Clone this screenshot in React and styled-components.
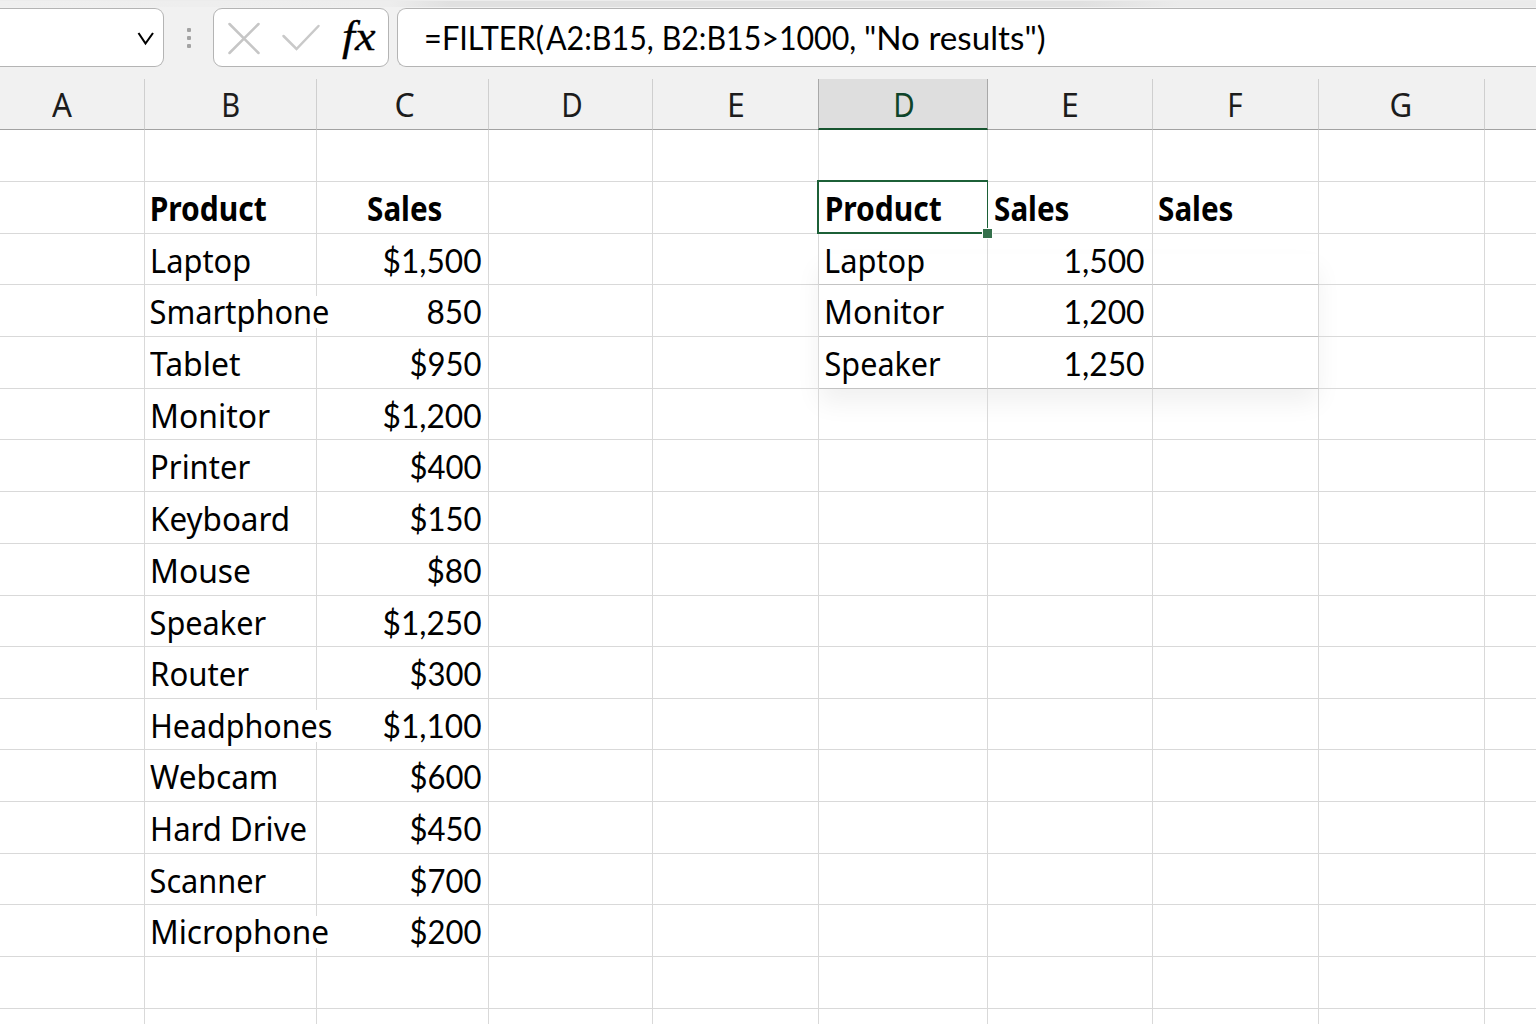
import React, { useLayoutEffect, useRef, useState } from 'react'
import styled, { createGlobalStyle, css } from 'styled-components'

const GlobalStyle = createGlobalStyle`
    * { box-sizing: border-box; }
    body {
        margin: 0;
        overflow: hidden;
        background: #fff;
        font-family: "Noto Sans", "Open Sans", sans-serif;
    }
`

const Window = styled.div`
    display: flex;
    flex-direction: column;
    width: 1536px;
    height: 1024px;
    overflow: hidden;
    color: #000;
`

const RibbonEdge = styled.div`
    flex: none;
    height: 7px;
    border-top: 1px solid #ececec;
    background: linear-gradient(to right, #efefef 0, #ededed 390px, #e0e0e0 450px, #e0e0e0 1080px, #ebebeb 1180px);
`

const FormulaBar = styled.div`
    display: flex;
    flex: none;
    height: 72px;
    padding-top: 1px;
    background: #f1f1f1;
`

const BarBox = styled.div`
    display: flex;
    align-items: center;
    height: 59px;
    border: 1px solid #b4b4b4;
    border-radius: 9px;
    background: #fff;
`

const NameBox = styled(BarBox)`
    width: 164px;
    justify-content: flex-end;
    padding-right: 8px;
    border-left: 0;
    border-radius: 0 9px 9px 0;
`

const Grip = styled.div`
    display: flex;
    flex-direction: column;
    align-items: center;
    justify-content: center;
    gap: 4px;
    width: 49px;
    height: 59px;
`

const Dot = styled.span`
    width: 4px;
    height: 4px;
    border-radius: 1px;
    background: #a3a3a3;
`

const ActionBox = styled(BarBox)`
    width: 176px;
    margin-right: 8px;
    padding-left: 13px;
    gap: 18px;
`

const FxLabel = styled.span`
    margin: 0 0 3px 3px;
    font: italic 43px/54px "Liberation Serif", serif;
    transform: scaleX(1.08);
    transform-origin: 0 50%;
    -webkit-text-stroke: 0.3px #000;
`

const FormulaInput = styled(BarBox)`
    flex: 1;
    padding: 0 0 2px 28px;
    border-right: 0;
    border-radius: 9px 0 0 9px;
`

const FormulaPart = styled.span`
    margin-right: ${({ $gap }) => $gap}px;
`

const ColumnHeads = styled.div`
    display: flex;
    flex: none;
    height: 51px;
    background: #f1f1f1;
`

const ColumnHead = styled.div`
    display: flex;
    justify-content: center;
    flex: none;
    width: ${({ $width }) => $width}px;
    padding-right: ${({ $after }) => $after || 0}px;
    padding-left: ${({ $before }) => $before || 0}px;
    border-right: 1px solid #cfcfcf;
    border-bottom: 1px solid #a2a2a2;
    color: #1c1c1c;
    ${({ $active }) => $active && css`
        margin-left: -1px;
        border-left: 1px solid #a8a8a8;
        border-right-color: #a8a8a8;
        border-bottom: 2px solid #17542f;
        background: #dedede;
        color: #0e4429;
    `}
`

const Row = styled.div`
    display: flex;
    flex: none;
    height: ${({ $height }) => $height}px;
`

const Cell = styled.div`
    position: relative;
    display: flex;
    flex: none;
    justify-content: ${({ $align }) => ($align === 'right' ? 'flex-end' : 'flex-start')};
    width: ${({ $width }) => $width}px;
    padding: 1px ${({ $inset }) => $inset || 7}px 0 ${({ $indent }) => $indent || 6}px;
    border-right: 1px solid #d9d9d9;
    border-bottom: 1px solid ${({ $spill }) => ($spill ? '#c3c3c3' : '#d9d9d9')};
`

const TextBox = styled.span`
    display: block;
    flex: none;
    width: ${({ $width }) => $width}px;
    height: 50px;
    font-family: ${({ $numeric }) => ($numeric ? 'Lato, sans-serif' : 'inherit')};
    font-size: 33.5px;
    font-weight: ${({ $bold }) => ($bold ? 700 : 400)};
    line-height: 50px;
    white-space: pre;
    ${({ $cover }) => $cover && css`
        background: linear-gradient(#fff, #fff) 0 10px / 100% 32px no-repeat;
    `}
`

const TextRun = styled.span`
    display: inline-block;
    transform-origin: 0 50%;
`

const Selection = styled.div`
    position: absolute;
    z-index: 2;
    inset: -2px -1px -1px -2px;
    border: 2px solid #1c6037;
    border-right-width: 1px;
`

const FillHandle = styled.div`
    position: absolute;
    right: -6px;
    bottom: -7px;
    width: 11px;
    height: 11px;
    border: 1px solid #fff;
    background: #35714c;
`

const SpillShadow = styled.div`
    position: absolute;
    top: 20px;
    left: 0;
    width: 499px;
    height: 135px;
    box-shadow: 0 14px 24px rgba(0, 0, 0, 0.06);
    pointer-events: none;
`

// squeezes a run of text so that its ink is exactly `width` wide
function FitText({ width, bold, cover, numeric, children }) {
    const ref = useRef(null)
    const [fit, setFit] = useState({ scale: 1, shift: 0 })

    useLayoutEffect(() => {
        const style = getComputedStyle(ref.current)
        const ctx = document.createElement('canvas').getContext('2d')
        // measured at 10x, the box is rounded to whole pixels
        ctx.font = `${style.fontWeight} ${parseFloat(style.fontSize) * 10}px ${style.fontFamily}`
        const m = ctx.measureText(children)
        const left = m.actualBoundingBoxLeft / 10
        const scale = width / (left + m.actualBoundingBoxRight / 10)
        setFit({ scale, shift: left * scale })
    }, [width, children])

    return (
        <TextBox $width={width} $bold={bold} $cover={cover} $numeric={numeric}>
            <TextRun ref={ref} style={{ transform: `translateX(${fit.shift}px) scaleX(${fit.scale})` }}>{children}</TextRun>
        </TextBox>
    )
}

const columns = [
    { name: 'A', width: 145, ink: 20, after: 21 },
    { name: 'B', width: 172, ink: 15, before: 1 },
    { name: 'C', width: 172, ink: 18, before: 4 },
    { name: 'D', width: 164, ink: 17, before: 3 },
    { name: 'E', width: 166, ink: 13, before: 2 },
    { name: 'D', width: 169, ink: 17, active: true, before: 3 },
    { name: 'E', width: 165, ink: 13 },
    { name: 'F', width: 166, ink: 12 },
    { name: 'G', width: 166, ink: 19, after: 3 },
    { name: '', width: 52 },
]

const formula = [
    { text: '=FILTER(', width: 117.5, gap: 2 },
    { text: 'A2:B15,', width: 106.5, gap: 12 },
    { text: 'B2:B15>1000,', width: 191, gap: 11 },
    { text: '"No results")', width: 178.5, gap: 0 },
]

const rowHeights = [52, 52, 51, 52, 52, 51, 52, 52, 52, 51, 52, 51, 52, 52, 51, 52, 52, 16]

const products = [
    ['Laptop', 96.5, '$1,500', 97],
    ['Smartphone', 177, '850', 53],
    ['Tablet', 90, '$950', 70],
    ['Monitor', 117, '$1,200', 97],
    ['Printer', 97, '$400', 70],
    ['Keyboard', 134.5, '$150', 70],
    ['Mouse', 96.5, '$80', 53],
    ['Speaker', 115, '$1,250', 97],
    ['Router', 96, '$300', 70],
    ['Headphones', 178, '$1,100', 97],
    ['Webcam', 126, '$600', 70],
    ['Hard Drive', 152.5, '$450', 70],
    ['Scanner', 115, '$700', 70],
    ['Microphone', 174.5, '$200', 70],
]

const results = [
    ['Laptop', 96.5, '1,500', 78],
    ['Monitor', 117, '1,200', 78],
    ['Speaker', 114.5, '1,250', 78],
]

// letters with an upright stem sit a little further in than round or open ones
function getIndent(text) {
    if (/^[HKLMPR]/.test(text)) return 7.8
    return /^[TW]/.test(text) ? 5.2 : 6.2
}

function getCell(row, col) {
    if (row === 1) {
        if (col === 1) return { text: 'Product', width: 114, bold: true, indent: 7.4 }
        if (col === 2) return { text: 'Sales', width: 73.5, bold: true, indent: 51.2 }
        if (col === 5) return { text: 'Product', width: 114, bold: true, indent: 7.8, selected: true }
        if (col === 6) return { text: 'Sales', width: 73.5, bold: true, indent: 7 }
        if (col === 7) return { text: 'Sales', width: 73.5, bold: true, indent: 5.8 }
        return {}
    }
    const product = products[row - 2]
    const result = results[row - 2]
    if (product && col === 1) return { text: product[0], width: product[1], indent: getIndent(product[0]), cover: product[1] > 170 }
    if (product && col === 2) return { text: product[2], width: product[3], align: 'right', numeric: true }
    if (result && col === 5) return { text: result[0], width: result[1], indent: getIndent(result[0]) + 0.6, spill: true, shadow: row === 2 }
    if (result && col === 6) return { text: result[2], width: result[3], align: 'right', numeric: true, inset: 8.5, spill: true }
    if (result && col === 7) return { spill: true }
    return {}
}

export default function App() {
    return (
        <Window>
            <GlobalStyle />
            <RibbonEdge />
            <FormulaBar>
                <NameBox>
                    <svg width="18" height="16" fill="none" stroke="#000" strokeWidth="2.1">
                        <path d="M1.5 3 L8.5 13.5 L16 3" />
                    </svg>
                </NameBox>
                <Grip><Dot /><Dot /><Dot /></Grip>
                <ActionBox>
                    <svg width="36" height="34" fill="none" stroke="#c6c6c6" strokeWidth="2.5" strokeLinecap="round">
                        <path d="M2.5 3 L31.5 32 M31.5 3 L2.5 32" />
                    </svg>
                    <svg width="40" height="34" fill="none" stroke="#c9c9c9" strokeWidth="2.5" strokeLinecap="round">
                        <path d="M2.5 15 L15.5 28 L37.5 5" />
                    </svg>
                    <FxLabel>fx</FxLabel>
                </ActionBox>
                <FormulaInput>
                    {formula.map((part) => (
                        <FormulaPart key={part.text} $gap={part.gap}>
                            <FitText width={part.width} numeric>{part.text}</FitText>
                        </FormulaPart>
                    ))}
                </FormulaInput>
            </FormulaBar>
            <ColumnHeads>
                {columns.map((col, index) => (
                    <ColumnHead
                        key={`head${index}`}
                        $width={col.active ? col.width + 1 : col.width}
                        $before={col.before}
                        $after={col.after}
                        $active={col.active}
                    >
                        {col.name && <FitText width={col.ink}>{col.name}</FitText>}
                    </ColumnHead>
                ))}
            </ColumnHeads>
            {rowHeights.map((height, row) => (
                <Row key={`row${row}`} $height={height}>
                    {columns.map((col, index) => {
                        const cell = getCell(row, index)
                        return (
                            <Cell
                                key={`cell${index}`}
                                $width={col.width}
                                $align={cell.align}
                                $indent={cell.indent}
                                $inset={cell.inset}
                                $spill={cell.spill}
                            >
                                {cell.shadow && <SpillShadow />}
                                {cell.text && (
                                    <FitText width={cell.width} bold={cell.bold} cover={cell.cover} numeric={cell.numeric}>
                                        {cell.text}
                                    </FitText>
                                )}
                                {cell.selected && <Selection><FillHandle /></Selection>}
                            </Cell>
                        )
                    })}
                </Row>
            ))}
        </Window>
    )
}
